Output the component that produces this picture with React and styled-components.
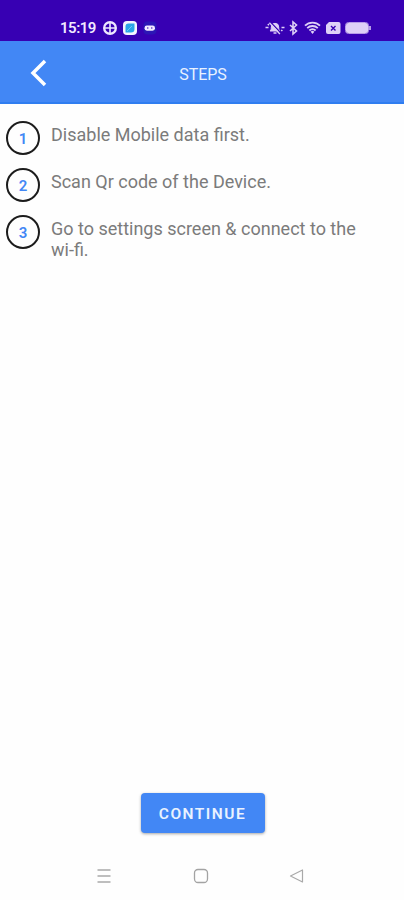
import React from 'react'
import styled, { createGlobalStyle } from 'styled-components'

const GlobalStyle = createGlobalStyle`
    * {
      box-sizing : border-box;
    }
    body {
      margin : 0;
      background-color : #fefefe;
      font-family : Roboto, sans-serif;
    }
`

const Styled = {
    Screen: styled.div`
      display : flex;
      width : 100%;
      height : 900px;
      flex-direction : column;
      background-color : #fefefe;
    `,
    StatusBar: styled.div`
      display : flex;
      align-items : center;
      justify-content : space-between;
      height : 41px;
      padding : 14px 33px 0 60px;
      background-color : #3700b3;
    `,
    StatusGroup: styled.div`
      display : flex;
      align-items : center;
      gap : 6px;
      height : 27px;
    `,
    Time: styled.span`
      width : 37px;
      padding-top : 1px;
      color : #f1e9ff;
      font-size : 15px;
      font-weight : 600;
      line-height : 26px;
      letter-spacing : -0.5px;
    `,
    Header: styled.header`
      display : grid;
      grid-template-columns : 76px 1fr 76px;
      align-items : center;
      height : 63px;
      background-color : #4287f5;
      border-bottom : 2px solid #2f7df0;
    `,
    Back: styled.button`
      display : flex;
      height : 61px;
      padding : 2px 0 0 29px;
      align-items : center;
      border : 0;
      background : none;
    `,
    Title: styled.h1`
      margin : 6px 0 0 2px;
      color : #e9f2ff;
      font-size : 16px;
      font-weight : 400;
      line-height : 20px;
      text-align : center;
    `,
    Steps: styled.ol`
      display : flex;
      flex : 1;
      flex-direction : column;
      gap : 13px;
      margin : 0;
      padding : 17px 6px 0;
      list-style : none;
    `,
    Step: styled.li`
      display : flex;
      gap : 11px;
      align-items : flex-start;
    `,
    Number: styled.span`
      display : flex;
      flex : none;
      align-items : center;
      justify-content : center;
      width : 34px;
      height : 34px;
      padding-top : 2px;
      border : 2px solid #1c1c1c;
      border-radius : 50%;
      color : #4287f5;
      font-size : 15px;
      font-weight : 600;
    `,
    StepText: styled.p`
      width : 320px;
      margin : 3px 0 0;
      color : #7b7b7b;
      font-size : 18px;
      line-height : 21px;
    `,
    Continue: styled.button`
      align-self : center;
      width : 124px;
      height : 40px;
      margin : 0 0 19px 1px;
      padding : 2px 0 0;
      border : 0;
      border-radius : 4px;
      background-color : #4287f5;
      box-shadow : 0 1px 3px rgba(0, 0, 0, 0.35);
      color : #e9f2ff;
      font-family : inherit;
      font-size : 15.5px;
      font-weight : 600;
      letter-spacing : 1.5px;
    `,
    NavBar: styled.nav`
      display : flex;
      align-items : center;
      justify-content : space-between;
      height : 48px;
      padding : 0 99px 0 96px;
    `,
}

const steps = [
    'Disable Mobile data first.',
    'Scan Qr code of the Device.',
    'Go to settings screen & connect to the wi-fi.',
]

const NotificationIcons = () => (
    <>
        <svg width="14" height="14" viewBox="0 0 14 14">
            <circle cx="7" cy="7" r="7" fill="#eee7ff" />
            <g fill="#3700b3">
                <path d="M6.2 2.4v3.800H2.400a4.700 4.700 0 0 1 3.800-3.800z" />
                <path d="M7.800 2.400v3.800h3.800a4.700 4.700 0 0 0-3.800-3.800z" />
                <path d="M6.200 11.600V7.800H2.400a4.700 4.700 0 0 0 3.800 3.800z" />
                <path d="M7.800 11.600V7.800h3.800a4.700 4.700 0 0 1-3.800 3.800z" />
            </g>
        </svg>
        <svg width="14" height="14" viewBox="0 0 14 14">
            <rect width="14" height="14" rx="4" fill="#f4f4ff" />
            <path d="M5.5 2.5h6v5.5a3.5 3.5 0 0 1-3.5 3.5H2.5v-6a3 3 0 0 1 3-3z" fill="#2ba4e8" />
            <path d="M4 10l5-5" stroke="#68c9f5" strokeWidth="1" />
        </svg>
        <svg width="14" height="14" viewBox="0 0 14 14">
            <rect x="0.5" y="0.5" width="13" height="13" rx="4" fill="#2c16b5" />
            <rect x="1.5" y="4.5" width="10.5" height="5.2" rx="2.4" fill="#f0eaff" />
            <circle cx="4.8" cy="7" r="0.7" fill="#3700b3" />
            <circle cx="8.8" cy="7" r="0.7" fill="#3700b3" />
        </svg>
    </>
)

const SystemIcons = () => (
    <svg width="106" height="16" viewBox="0 0 106 16" fill="none" stroke="#ded0f7">
        <path d="M5 11c1.200-1 1.300-2.200 1.300-4a3.700 3.700 0 0 1 7.400 0c0 1.800.100 3 1.300 4z" fill="#ded0f7" />
        <path d="M8.500 13h3M0.500 7.500h3M16.500 7.500h3M2.800 4.200l1.200 1M16.200 10l1.200 1" strokeWidth="1.600" />
        <path d="M5.400 2l10.500 11" stroke="#3700b3" strokeWidth="1.200" />
        <path d="M4.400 2.800l10.500 11.200" strokeWidth="1.300" />
        <path d="M25 5l6.500 6-3.500 3V2l3.500 3L25 11" strokeWidth="1.600" />
        <path d="M40 5.700a10.500 10.500 0 0 1 15 0M42.200 8.200a7.500 7.500 0 0 1 10.600 0M44.400 10.500a4.400 4.400 0 0 1 6.200 0" strokeWidth="1.800" />
        <path d="M45.700 11.700a2.600 2.600 0 0 1 3.600 0l-1.800 2.300z" fill="#ded0f7" stroke="none" />
        <path d="M64 2h9.500a2 2 0 0 1 2 2v8a2 2 0 0 1-2 2H63a2 2 0 0 1-2-2V5z" fill="#ded0f7" stroke="none" />
        <path d="M66 6l4.500 4.500M70.500 6L66 10.500" stroke="#3700b3" strokeWidth="1.400" />
        <rect x="80.500" y="2.500" width="23" height="11" rx="3" strokeWidth="1" stroke="#b79be8" />
        <rect x="81" y="3" width="22" height="10" rx="2.500" fill="#ded0f7" stroke="none" />
        <path d="M105 6v4" strokeWidth="1.500" />
    </svg>
)

const App = () => {
    return (
        <>
            <GlobalStyle />
            <Styled.Screen>
                <Styled.StatusBar>
                    <Styled.StatusGroup>
                        <Styled.Time>15:19</Styled.Time>
                        <NotificationIcons />
                    </Styled.StatusGroup>
                    <Styled.StatusGroup>
                        <SystemIcons />
                    </Styled.StatusGroup>
                </Styled.StatusBar>
                <Styled.Header>
                    <Styled.Back aria-label="Back">
                        <svg width="18" height="28" viewBox="0 0 18 28">
                            <path d="M16 2L4 14l12 12" fill="none" stroke="#ffffff" strokeWidth="3.500" />
                        </svg>
                    </Styled.Back>
                    <Styled.Title>STEPS</Styled.Title>
                </Styled.Header>
                <Styled.Steps>
                    {steps.map((step, index) => (
                        <Styled.Step key={step}>
                            <Styled.Number>{index + 1}</Styled.Number>
                            <Styled.StepText>{step}</Styled.StepText>
                        </Styled.Step>
                    ))}
                </Styled.Steps>
                <Styled.Continue>CONTINUE</Styled.Continue>
                <Styled.NavBar>
                    <svg width="16" height="16" viewBox="0 0 16 16">
                        <path d="M1.500 2h13M1.500 8h13M1.500 14h13" stroke="#a9a9a9" strokeWidth="1.300" />
                    </svg>
                    <svg width="16" height="16" viewBox="0 0 16 16">
                        <rect x="1.500" y="1.500" width="13" height="13" rx="3.500" fill="none" stroke="#a3a3a3" strokeWidth="1.300" />
                    </svg>
                    <svg width="16" height="16" viewBox="0 0 16 16">
                        <path d="M13.500 2v12L1.500 8z" fill="none" stroke="#a9a9a9" strokeWidth="1.200" strokeLinejoin="round" />
                    </svg>
                </Styled.NavBar>
            </Styled.Screen>
        </>
    )
}

export default App
